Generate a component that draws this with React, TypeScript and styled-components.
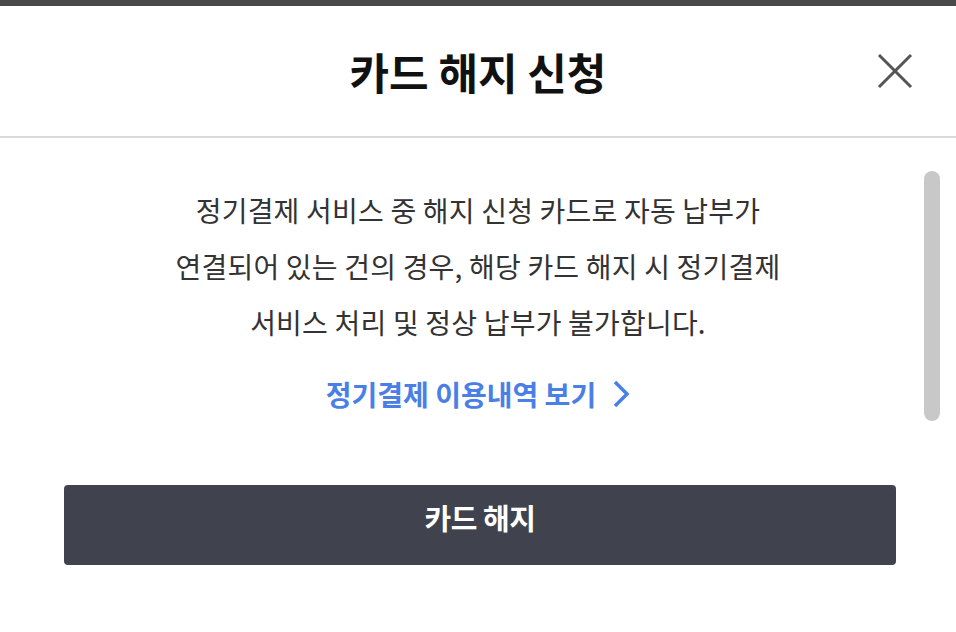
import styled, { createGlobalStyle } from "styled-components";

const GlobalStyle = createGlobalStyle`
  html, body {
    margin: 0;
    padding: 0;
    background: #ffffff;
  }
  body {
    font-family: "Noto Sans CJK KR", "Noto Sans", sans-serif;
    color: #333333;
  }
`;

const Page = styled.div`
  width: 956px;
  height: 632px;
  display: flex;
  flex-direction: column;
  overflow: hidden;
`;

const TopBar = styled.div`
  height: 6px;
  background: #4a4a4a;
`;

const Header = styled.header`
  height: 130px;
  display: grid;
  grid-template-columns: 1fr auto 1fr;
  align-items: center;
  border-bottom: 2px solid #d9d9d9;
`;

const Title = styled.h1`
  grid-column: 2;
  margin: 0;
  font-size: 43px;
  font-weight: 700;
  color: #111111;
`;

const CloseButton = styled.button`
  justify-self: end;
  margin-right: 42px;
  width: 38px;
  height: 38px;
  padding: 0;
  border: none;
  background: none;
  display: flex;
  align-items: center;
  justify-content: center;
`;

const Content = styled.section`
  position: relative;
  padding: 44px 0 0;
  height: 312px;
  box-sizing: border-box;
`;

const Notice = styled.p`
  margin: 0;
  text-align: center;
  font-size: 28px;
  line-height: 56px;
  letter-spacing: 0.2px;
  color: #333333;
`;

const HistoryLink = styled.a`
  margin-top: 24px;
  display: flex;
  justify-content: center;
  align-items: center;
  gap: 16px;
  font-size: 28px;
  font-weight: 700;
  color: #4a80e6;
  text-decoration: none;
`;

const ScrollThumb = styled.div`
  position: absolute;
  top: 33px;
  right: 16px;
  width: 16px;
  height: 250px;
  border-radius: 8px;
  background: #c8c8c8;
`;

const Footer = styled.div`
  padding: 35px 60px 0 64px;
`;

const SubmitButton = styled.button`
  width: 100%;
  height: 80px;
  padding: 0 0 16px;
  border: none;
  border-radius: 4px;
  background: #40424d;
  color: #ffffff;
  font-family: "Noto Sans CJK KR", "Noto Sans", sans-serif;
  font-size: 29px;
  font-weight: 700;
  letter-spacing: -0.5px;
`;

export default function App() {
  return (
    <Page>
      <GlobalStyle />
      <TopBar />
      <Header>
        <Title>카드 해지 신청</Title>
        <CloseButton aria-label="닫기">
          <svg width="38" height="38" viewBox="0 0 38 38">
            <path d="M3 3 L35 35 M35 3 L3 35" stroke="#555555" strokeWidth="3" />
          </svg>
        </CloseButton>
      </Header>
      <Content>
        <Notice>
          정기결제 서비스 중 해지 신청 카드로 자동 납부가
          <br />
          연결되어 있는 건의 경우, 해당 카드 해지 시 정기결제
          <br />
          서비스 처리 및 정상 납부가 불가합니다.
        </Notice>
        <HistoryLink href="#">
          정기결제 이용내역 보기
          <svg width="18" height="28" viewBox="0 0 18 28">
            <path d="M3 2 L15 14 L3 26" fill="none" stroke="#4a80e6" strokeWidth="3.5" />
          </svg>
        </HistoryLink>
        <ScrollThumb />
      </Content>
      <Footer>
        <SubmitButton>카드 해지</SubmitButton>
      </Footer>
    </Page>
  );
}
